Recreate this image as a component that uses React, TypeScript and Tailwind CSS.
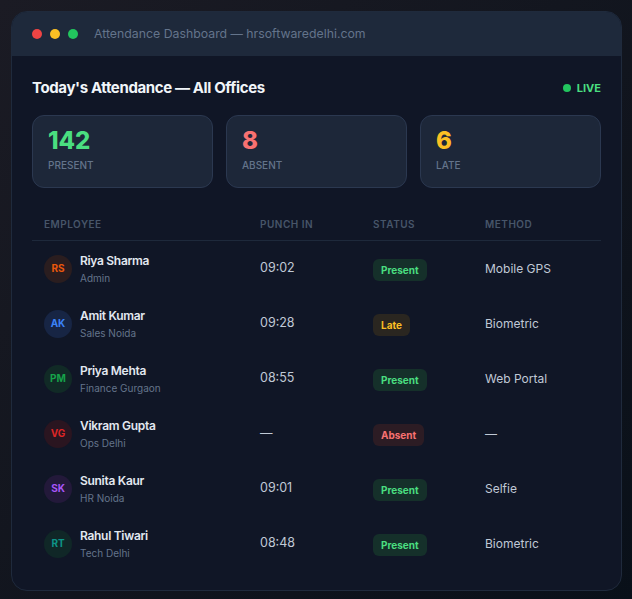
const stats = [
  { value: '142', label: 'Present', color: 'text-[#4ade80]' },
  { value: '8', label: 'Absent', color: 'text-[#f87171]' },
  { value: '6', label: 'Late', color: 'text-[#fbbf24]' },
];

type Status = 'Present' | 'Late' | 'Absent';

const rows: {
  initials: string;
  name: string;
  dept: string;
  time: string;
  status: Status;
  method: string;
  avatar: string;
}[] = [
  { initials: 'RS', name: 'Riya Sharma', dept: 'Admin', time: '09:02', status: 'Present', method: 'Mobile GPS', avatar: 'bg-[#2a1d1f] text-[#ea580c]' },
  { initials: 'AK', name: 'Amit Kumar', dept: 'Sales Noida', time: '09:28', status: 'Late', method: 'Biometric', avatar: 'bg-[#172544] text-[#3b82f6]' },
  { initials: 'PM', name: 'Priya Mehta', dept: 'Finance Gurgaon', time: '08:55', status: 'Present', method: 'Web Portal', avatar: 'bg-[#112a26] text-[#16a34a]' },
  { initials: 'VG', name: 'Vikram Gupta', dept: 'Ops Delhi', time: '—', status: 'Absent', method: '—', avatar: 'bg-[#2a1520] text-[#dc2626]' },
  { initials: 'SK', name: 'Sunita Kaur', dept: 'HR Noida', time: '09:01', status: 'Present', method: 'Selfie', avatar: 'bg-[#23193a] text-[#a855f7]' },
  { initials: 'RT', name: 'Rahul Tiwari', dept: 'Tech Delhi', time: '08:48', status: 'Present', method: 'Biometric', avatar: 'bg-[#102727] text-[#0d9488]' },
];

const badge: Record<Status, string> = {
  Present: 'bg-[#15302a] text-[#4ade80]',
  Late: 'bg-[#2a2620] text-[#fbbf24]',
  Absent: 'bg-[#2c1c24] text-[#f87171]',
};

const cols = 'grid grid-cols-[216px_113px_112px_1fr]';

export default function App() {
  return (
    <div
      className="min-h-screen w-full bg-gradient-to-br from-[#1b1b24] to-[#091019] p-[11px]"
      style={{ fontFamily: 'Inter, "Noto Sans", sans-serif' }}
    >
      <div className="w-[611px] h-[580px] rounded-2xl border border-[#1f2a3c] bg-[#101626] overflow-hidden">
        {/* title bar */}
        <div className="h-11 bg-[#1e293b] flex items-center px-5 gap-2">
          <span className="w-2.5 h-2.5 rounded-full bg-[#ef4444]" />
          <span className="w-2.5 h-2.5 rounded-full bg-[#fbbf24]" />
          <span className="w-2.5 h-2.5 rounded-full bg-[#22c55e]" />
          <span className="ml-2 text-[12.3px] text-[#64748b]">Attendance Dashboard — hrsoftwaredelhi.com</span>
        </div>

        <div className="px-5 pt-[22px]">
          {/* heading */}
          <div className="flex items-center justify-between h-5">
            <h1 className="text-[15px] font-bold tracking-tight text-[#f1f5f9]">Today's Attendance — All Offices</h1>
            <div className="flex items-center gap-1.5">
              <span className="w-2 h-2 rounded-full bg-[#22c55e]" />
              <span className="text-[11px] font-bold text-[#4ade80]">LIVE</span>
            </div>
          </div>

          {/* stats */}
          <div className="grid grid-cols-3 gap-[13px] mt-[17px]">
            {stats.map((s) => (
              <div key={s.label} className="h-[73px] rounded-xl border border-[#2b3850] bg-[#1d2739] px-[15px] pt-[11px]">
                <div className={`text-[24px] leading-7 font-extrabold ${s.color}`}>{s.value}</div>
                <div className="mt-[3px] text-[10px] uppercase text-[#64748b] font-medium">{s.label}</div>
              </div>
            ))}
          </div>

          {/* table */}
          <div className="mt-[19px]">
            <div className={`${cols} border-b border-[#1e293b] pt-[10px] pb-[8px] text-[10px] font-semibold uppercase tracking-wider text-[#475569]`}>
              <div className="px-3">Employee</div>
              <div className="px-3">Punch In</div>
              <div className="px-3">Status</div>
              <div className="px-3">Method</div>
            </div>
            {rows.map((r) => (
              <div key={r.name} className={`${cols} h-[55px] items-center`}>
                <div className="px-3 flex items-center gap-2">
                  <div className={`w-7 h-7 rounded-full flex items-center justify-center text-[10px] font-bold ${r.avatar}`}>
                    {r.initials}
                  </div>
                  <div className="leading-tight">
                    <div className="text-[12px] font-semibold text-[#e2e8f0] tracking-tight">{r.name}</div>
                    <div className="mt-[4px] text-[10px] text-[#64748b]">{r.dept}</div>
                  </div>
                </div>
                <div className="px-3 text-[12.5px] text-[#c0c9d6]">{r.time}</div>
                <div className="px-3">
                  <span className={`inline-block px-2 py-[5px] rounded-md text-[10px] font-bold leading-3 ${badge[r.status]}`}>
                    {r.status}
                  </span>
                </div>
                <div className="px-3 text-[12px] text-[#c0c9d6]">{r.method}</div>
              </div>
            ))}
          </div>
        </div>
      </div>
    </div>
  );
}
